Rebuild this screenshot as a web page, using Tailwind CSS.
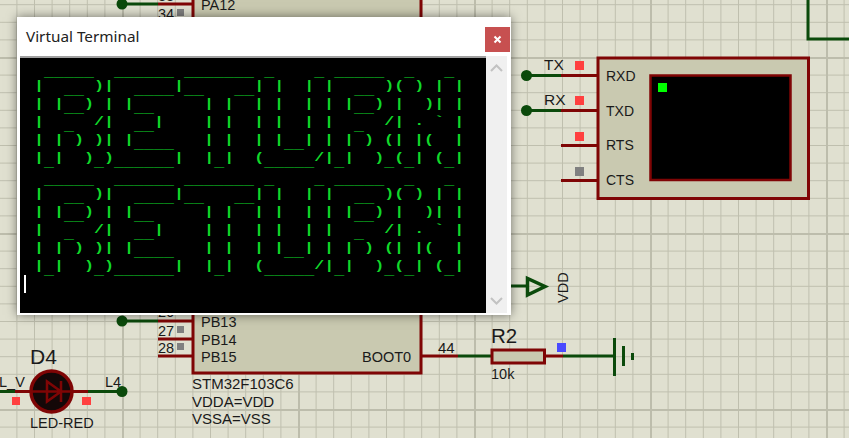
<!DOCTYPE html>
<html lang="en">
  <head>
    <meta charset="UTF-8" />
    <title>Virtual Terminal</title>
    <script src="https://cdn.jsdelivr.net/npm/@tailwindcss/browser@4"></script>
  </head>
  <body class="bg-[#e0e0d0]">
    <div class="relative w-[849px] h-[438px] overflow-hidden bg-[#e0e0d0]">
      <!-- schematic canvas -->
      <svg class="absolute inset-0 font-['Liberation_Sans',sans-serif]" width="849" height="438" viewBox="0 0 849 438">
        <defs>
          <pattern id="minor" x="16.4" y="4.2" width="17.6" height="17.6" patternUnits="userSpaceOnUse">
            <path d="M0.5 0V17.6M0 0.5H17.6" stroke="#bfbfae" fill="none" />
          </pattern>
          <pattern id="major" x="122" y="57" width="176" height="176" patternUnits="userSpaceOnUse">
            <path d="M1 0V176M0 1H176" stroke="#bdbdac" stroke-width="2" fill="none" />
          </pattern>
        </defs>
        <rect width="849" height="438" fill="url(#minor)" />
        <rect width="849" height="438" fill="url(#major)" />

        <!-- MCU -->
        <rect x="193" y="-60" width="228" height="433" fill="#c9c9b0" stroke="#7f0505" stroke-width="3" />
        <g fill="none" stroke-width="3">
          <path d="M122 4H158M122 321H158" stroke="#0b4a0b" />
          <path d="M158 4H192M158 21H192M158 321H192M158 339H192M158 356H192" stroke="#7f0505" />
          <path d="M421 356H458M545 356H563" stroke="#7f0505" />
          <path d="M458 356H491M563 356H614" stroke="#0b4a0b" />
        </g>
        <circle cx="122" cy="4" r="5.5" fill="#0b4a0b" />
        <circle cx="122" cy="321" r="5.5" fill="#0b4a0b" />
        <g fill="#808080">
          <rect x="177" y="9" width="7" height="7" />
          <rect x="177" y="326" width="7" height="7" />
          <rect x="177" y="343" width="7" height="7" />
        </g>
        <g fill="#1a1a1a" font-size="14.5">
          <text x="158" y="1">33</text>
          <text x="158" y="19">34</text>
          <text x="158" y="317">26</text>
          <text x="158" y="336">27</text>
          <text x="158" y="353">28</text>
          <text x="201" y="10">PA12</text>
          <text x="201" y="28">PA13</text>
          <text x="201" y="327">PB13</text>
          <text x="201" y="345">PB14</text>
          <text x="201" y="362">PB15</text>
          <text x="362" y="362">BOOT0</text>
          <text x="438" y="353" font-size="15">44</text>
          <text x="491" y="379">10k</text>
          <text x="30" y="428">LED-RED</text>
          <text x="-1" y="387">L_V</text>
          <text x="105" y="387">L4</text>
        </g>
        <g fill="#1a1a1a" font-size="15">
          <text x="192" y="389">STM32F103C6</text>
          <text x="192" y="407">VDDA=VDD</text>
          <text x="192" y="424">VSSA=VSS</text>
        </g>

        <!-- R2 and ground -->
        <rect x="492" y="350" width="52.5" height="13" fill="#c9c9b0" stroke="#7f0505" stroke-width="3" />
        <text x="491" y="343" font-size="20.5" fill="#1a1a1a">R2</text>
        <rect x="557" y="343" width="9" height="9" fill="#4a4aff" />
        <path d="M614.5 338V376M623.5 346V366M632.5 353V360" stroke="#0b4a0b" stroke-width="3" fill="none" />

        <!-- VDD terminal -->
        <path d="M511 286H527" stroke="#0b4a0b" stroke-width="3" fill="none" />
        <path d="M527.5 278.5V295L545 286.5Z" stroke="#0b4a0b" stroke-width="3.5" fill="none" />
        <text transform="translate(568 303) rotate(-90)" font-size="14.5" fill="#1a1a1a">VDD</text>

        <!-- top right wire -->
        <path d="M808 0V39H849" stroke="#0b4a0b" stroke-width="3" fill="none" />

        <!-- virtual terminal part -->
        <rect x="598" y="58" width="210.5" height="140.5" fill="#c9c9b0" stroke="#7f0505" stroke-width="3" />
        <rect x="650.5" y="75.5" width="140" height="104.5" fill="#000" stroke="#7f0505" stroke-width="2.5" />
        <rect x="658" y="83" width="9" height="9" fill="#00ff00" />
        <g fill="none" stroke-width="3">
          <path d="M526 75.5H561M526 110.5H561" stroke="#0b4a0b" />
          <path d="M561 75.5H597M561 110.5H597M561 145.5H597M561 180.5H597" stroke="#7f0505" />
        </g>
        <circle cx="526.5" cy="75.5" r="5.5" fill="#0b4a0b" />
        <circle cx="526.5" cy="110.5" r="5.5" fill="#0b4a0b" />
        <g fill="#ff4040">
          <rect x="575" y="61" width="9" height="9" />
          <rect x="575" y="96" width="9" height="9" />
          <rect x="575" y="132" width="9" height="9" />
        </g>
        <rect x="575" y="167" width="9" height="9" fill="#808080" />
        <g fill="#1a1a1a" font-size="14">
          <text x="544" y="70" font-size="15.5">TX</text>
          <text x="544" y="105" font-size="15.5">RX</text>
          <text x="606" y="81">RXD</text>
          <text x="606" y="116">TXD</text>
          <text x="606" y="150">RTS</text>
          <text x="606" y="185">CTS</text>
        </g>

        <!-- LED -->
        <path d="M0 391.5H15M88 391.5H122" stroke="#0b4a0b" stroke-width="3" fill="none" />
        <path d="M15 391.5H88" stroke="#7f0505" stroke-width="3" fill="none" />
        <circle cx="51.5" cy="391.5" r="20.5" fill="#140808" stroke="#7f0505" stroke-width="3.5" />
        <path d="M31 391.5H73M61 381V402M47 381.5V401.5L61 391.5Z" stroke="#7f0505" stroke-width="2.5" fill="none" />
        <circle cx="122" cy="391.5" r="5.5" fill="#0b4a0b" />
        <rect x="12" y="397" width="8" height="8" fill="#ff4040" />
        <rect x="82" y="397" width="9" height="8" fill="#ff4040" />
        <text x="30" y="364" font-size="21" fill="#1a1a1a">D4</text>
      </svg>

      <!-- terminal window -->
      <div class="absolute left-[17px] top-[17px] w-[494px] h-[298px] flex flex-col bg-white shadow-[0_0_10px_rgba(0,0,0,0.5)]">
        <div class="h-[39px] flex items-center justify-between shrink-0">
          <span class="pl-[9px] text-[15.3px] text-[#222] font-['Noto_Sans',sans-serif]">Virtual Terminal</span>
          <div class="w-[25px] h-[25px] mr-px mt-[5px] flex items-center justify-center bg-[#c75050]">
            <svg width="9" height="9" viewBox="0 0 9 9"><path d="M1.5 1.5L7.5 7.5M7.5 1.5L1.5 7.5" stroke="#fff" stroke-width="2" fill="none" /></svg>
          </div>
        </div>
        <div class="flex-1 min-h-0 flex pl-[3px] pr-[4px] pb-[2px]">
          <div class="flex-1 min-w-0 bg-black border-t-2 border-[#a0a0a0] pt-px overflow-hidden">
            <pre id="screen" class="ml-[4px] h-[216px] scale-x-[1.3333] origin-left font-['Liberation_Mono',monospace] font-bold text-[12.5px] leading-[18px] text-[#10d82a]"></pre>
            <div class="ml-[4px] w-[1.5px] h-[18px] bg-white"></div>
          </div>
          <div class="w-[21px] shrink-0 flex flex-col justify-between items-center py-[8px] bg-[#f0f0f0]">
            <svg width="13" height="8" viewBox="0 0 13 8"><path d="M1 7L6.5 1.5L12 7" stroke="#c2c2c2" stroke-width="2" fill="none" /></svg>
            <svg width="13" height="8" viewBox="0 0 13 8"><path d="M1 1L6.5 6.5L12 1" stroke="#c2c2c2" stroke-width="2" fill="none" /></svg>
          </div>
        </div>
      </div>
    </div>

    <script>
      const banner = [
        "  _____  ______ _______ _    _ _____  _   _",
        " |  __ )|  ____|__   __| |  | |  __ )( ) | |",
        " | |__) | |__     | |  | |  | | |__) |  )| |",
        " |  _  /|  __|    | |  | |  | |  _  /| . ` |",
        " | | ) )| |____   | |  | |__| | | ) (| |(  |",
        " |_|  )_)______|  |_|  (_____/|_|  )_(_| (_|",
      ];

      // underscores sit below the bars on the real terminal, so nudge them down
      const html = [...banner, ...banner]
        .map(line => line.replace(/_+/g, m => `<span class="relative top-[5px]">${m}</span>`))
        .join("\n");
      document.getElementById("screen").innerHTML = html;
    </script>
  </body>
</html>
